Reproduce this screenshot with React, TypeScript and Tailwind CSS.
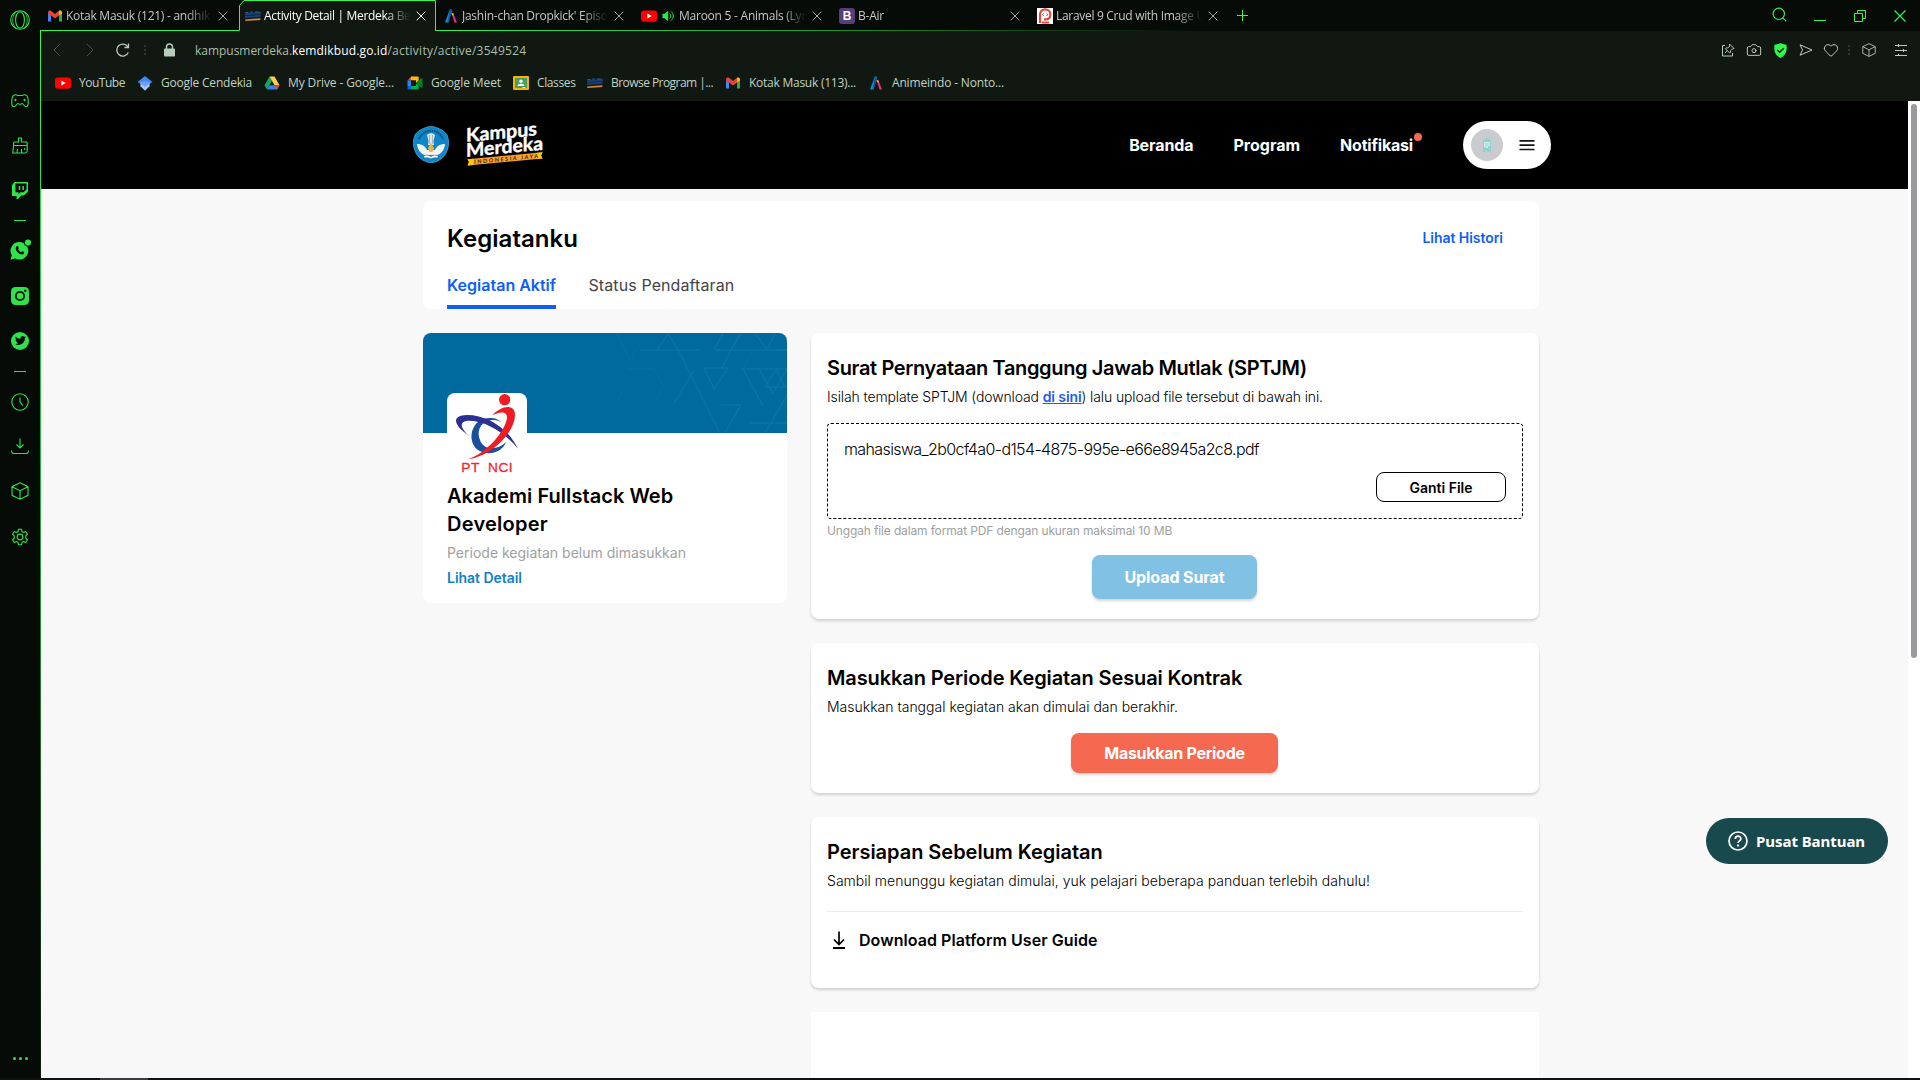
import type { ReactNode } from "react";
import { Camera, Heart, Search } from "lucide-react";
import { FaTwitter } from "react-icons/fa";

/* ---------- site icons ---------- */

const Gmail = () => (
  <svg viewBox="0 0 16 16" className="h-4 w-4">
    <path d="M1 3.5v10h3V7.5z" fill="#4285f4" />
    <path d="M15 3.5v10h-3V7.5z" fill="#34a853" />
    <path d="M1 4.5C1 2.4 3 2 4 2.8L8 6l4-3.2v4.7L8 10.6 4 7.5 1 5.4z" fill="#ea4335" />
    <path d="M12 2.8c1-.8 3-.4 3 1.7v.9l-3 2.1z" fill="#fbbc04" />
  </svg>
);

const Kampus = () => (
  <svg viewBox="0 0 16 16" className="h-4 w-4">
    <path d="M0 5.2l16-1.4v2.4L0 7.4zM0 8l15.500-1.200v2L0 10z" fill="#173f74" />
    <path d="M.5 4.500h3M5 4h3M10 4h4" stroke="#2b5c9c" strokeWidth="1" />
    <path d="M.3 11.600l15-1.400v1.800l-15 1z" fill="#d98b43" />
  </svg>
);

const Animeindo = () => (
  <svg viewBox="0 0 16 16" className="h-4 w-4">
    <path d="M7 1l2 1-3.500 12.500H2z" fill="#0c8fd6" />
    <path d="M7 1l2.500 2L6 12l-1.500 2.500z" fill="#075a9c" />
    <path d="M8.500 5l2 .5L14 14.500h-2.500z" fill="#e0307a" />
    <path d="M8.600 5l1.800.5.5 1.800H9z" fill="#ffb020" />
  </svg>
);

const YouTube = () => (
  <svg viewBox="0 0 16 16" className="h-4 w-4">
    <rect x="0" y="2.500" width="16" height="11.200" rx="2.600" fill="#ff0000" />
    <path d="M6.300 5.600l4.400 2.500-4.400 2.500z" fill="#fff" />
  </svg>
);

const Bootstrap = () => (
  <span className="flex h-4 w-4 items-center justify-center rounded-[3px] bg-[#563d7c] font-['Liberation_Sans'] text-[12px] leading-4 font-bold text-white">
    B
  </span>
);

const Laravel = () => (
  <svg viewBox="0 0 16 16" className="h-4 w-4">
    <rect width="16" height="16" fill="#fff" />
    <path d="M3 15V6.500a5.200 5.200 0 0 1 10.400 0c0 3-2 4.900-5 4.900H7" fill="none" stroke="#e8473c" strokeWidth="2.200" />
    <path d="M6.600 5.500L5.400 6.700l1.200 1.200M9.700 5.500l1.200 1.200-1.200 1.200" fill="none" stroke="#333" strokeWidth=".8" />
    <path d="M5 14.500h7" stroke="#e8473c" strokeWidth="2" />
  </svg>
);

const Cendekia = () => (
  <svg viewBox="0 0 16 16" className="h-4 w-4">
    <path d="M8 1L.5 7 4 9.200h8L15.500 7z" fill="#4285f4" />
    <path d="M3.500 7.500h9v3.700L8 15.800l-4.500-4.600z" fill="#a9c6fa" />
    <path d="M3.500 8.500C5 5.500 11 5.500 12.500 8.500L8 12z" fill="#6ea0f5" />
  </svg>
);

const Drive = () => (
  <svg viewBox="0 0 16 16" className="h-4 w-4">
    <path d="M5.500 1.500L8 5.800 3 14.500.5 10.200z" fill="#11a861" />
    <path d="M5.500 1.500h5l5 8.700h-5z" fill="#ffcf48" />
    <path d="M5.500 10.200h10L13 14.500H3z" fill="#3f7ef0" />
    <path d="M11.500 10.200h4L13 14.500z" fill="#ea4335" />
  </svg>
);

const Meet = () => (
  <svg viewBox="0 0 16 16" className="h-4 w-4">
    <path d="M.5 5.500l3.500-4V5.500z" fill="#ea4335" />
    <path d="M.5 5.500H4v5.500H.5z" fill="#2684fc" />
    <path d="M4 1.500h6.500c.8 0 1.200.4 1.200 1.200v2.800L9 8V5.300H4z" fill="#ffba00" />
    <path d="M.5 11H4v3.500H1.700c-.8 0-1.200-.4-1.200-1.200z" fill="#0066da" />
    <path d="M4 11h5V8l2.700 2.400v2.900c0 .8-.4 1.200-1.200 1.200H4z" fill="#00ac47" />
    <path d="M9 8l5-4.500c.7-.5 1.500-.3 1.500.6v7.800c0 .9-.8 1.100-1.500.6z" fill="#00832d" />
  </svg>
);

const Classroom = () => (
  <svg viewBox="0 0 16 16" className="h-4 w-4">
    <rect x="0" y="1" width="16" height="14" rx="1" fill="#f4b400" />
    <rect x="2" y="3" width="12" height="10" fill="#4a9d5e" />
    <circle cx="8" cy="6.300" r="1.700" fill="#fff" />
    <path d="M4.500 11c0-3 7-3 7 0z" fill="#fff" />
    <path d="M9.500 13h3v-.9h-3z" fill="#e8f5ee" />
  </svg>
);

const Speaker = () => (
  <svg viewBox="0 0 12 12" className="h-3 w-3">
    <path d="M.5 3.800h2L6.200.8v10.400L2.500 8.200h-2z" fill="#2fe34a" />
    <path d="M7.700 3.500c1.500 1.300 1.500 3.700 0 5M9 1.500c3 2.500 3 6.500 0 9" fill="none" stroke="#2fe34a" />
  </svg>
);

const CloseMark = ({ tone }: { tone: string }) => (
  <svg viewBox="0 0 10 10" className={`h-[10px] w-[10px] shrink-0 ${tone}`}>
    <path d="M.7.7l8.600 8.600M9.300.7L.7 9.300" stroke="currentColor" fill="none" />
  </svg>
);

const Cube = ({ className }: { className: string }) => (
  <svg viewBox="0 0 18 18" className={className} fill="none" stroke="currentColor" strokeWidth="1.100">
    <path d="M9 .8l8 3.900v8.600l-8 3.900-8-3.900V4.700zM1 4.700l8 4 8-4M9 8.700v8.500" />
  </svg>
);

/* ---------- browser chrome ---------- */

type TabInfo = {
  icon: ReactNode;
  title: string;
  tracking: string;
  active?: boolean;
  sound?: boolean;
};

const tabs: TabInfo[] = [
  { icon: <Gmail />, title: "Kotak Masuk (121) - andhik", tracking: "tracking-[-0.26px]" },
  { icon: <Kampus />, title: "Activity Detail | Merdeka Be", tracking: "tracking-[-0.32px]", active: true },
  { icon: <Animeindo />, title: "Jashin-chan Dropkick' Episo", tracking: "tracking-[-0.26px]" },
  { icon: <YouTube />, title: "Maroon 5 - Animals (Lyri", tracking: "tracking-[-0.24px]", sound: true },
  { icon: <Bootstrap />, title: "B-Air", tracking: "tracking-[-0.23px]" },
  { icon: <Laravel />, title: "Laravel 9 Crud with Image U", tracking: "tracking-[-0.3px]" },
];

function Tab({ icon, title, tracking, active, sound }: TabInfo) {
  return (
    <div
      className={`relative flex h-[31px] w-[198px] shrink-0 items-center pt-[1px] pr-[11px] pl-[6px] ${
        active ? "text-white" : "text-[#c3c8c4]"
      }`}
    >
      {active && (
        <svg viewBox="0 0 198 31" className="absolute top-0 left-0 h-[31px] w-[198px]">
          <path d="M.5 31V5.500L5 .5h191.500V31z" fill="#111812" />
          <path d="M0 30.500h.5V5.500L5 .5h191.500v30h1.500" fill="none" stroke="#36f34f" />
        </svg>
      )}
      <span className="relative flex shrink-0">{icon}</span>
      {sound && (
        <span className="ml-[5px] flex shrink-0">
          <Speaker />
        </span>
      )}
      <span
        className={`relative mr-[6px] min-w-0 flex-1 text-[12px] leading-4 whitespace-nowrap [mask-image:linear-gradient(to_right,black_82%,transparent)] ${
          sound ? "ml-[5px]" : "ml-[3px]"
        } ${tracking}`}
      >
        {title}
      </span>
      <span className="relative flex">
        <CloseMark tone={active ? "text-white" : "text-[#a4aaa5]"} />
      </span>
    </div>
  );
}

const bookmarks: { icon: ReactNode; label: string; box: string }[] = [
  { icon: <YouTube />, label: "YouTube", box: "w-[82px] tracking-[-0.48px]" },
  { icon: <Cendekia />, label: "Google Cendekia", box: "w-[127px] tracking-[-0.22px]" },
  { icon: <Drive />, label: "My Drive - Google...", box: "w-[143px] tracking-[-0.11px]" },
  { icon: <Meet />, label: "Google Meet", box: "w-[106px] tracking-[-0.1px]" },
  { icon: <Classroom />, label: "Classes", box: "w-[74px] tracking-[-0.38px]" },
  { icon: <Kampus />, label: "Browse Program |...", box: "w-[138px] tracking-[-0.55px]" },
  { icon: <Gmail />, label: "Kotak Masuk (113)...", box: "w-[143px] tracking-[-0.25px]" },
  { icon: <Animeindo />, label: "Animeindo - Nonto...", box: "w-[150px] tracking-[-0.17px]" },
];

const Dots = () => (
  <span className="flex flex-col gap-[2px]">
    <i className="h-[2px] w-[2px] bg-[#2c382e]" />
    <i className="h-[2px] w-[2px] bg-[#2c382e]" />
    <i className="h-[2px] w-[2px] bg-[#2c382e]" />
  </span>
);

function TabStrip() {
  return (
    <div className="flex h-[31px] justify-between bg-[#060b07]">
      <div className="relative flex">
        <div className="absolute bottom-0 left-0 h-px w-[199px] bg-[#36f34f]" />
        <div className="absolute bottom-0 left-[395px] h-px w-[760px] bg-linear-to-r from-[#36f34f] via-[#1f9a31] to-transparent" />
        <div className="flex pl-px">
          {tabs.map((t) => (
            <Tab key={t.title} {...t} />
          ))}
        </div>
        <svg viewBox="0 0 12 12" className="mt-[9px] ml-[7px] h-3 w-3">
          <path d="M6.500 1v11M1 6.500h11" stroke="#36f34f" />
        </svg>
      </div>
      <div className="flex items-center pr-[14px] text-[#36f34f]">
        <Search className="mr-[26px] mb-[3px] h-[17px] w-[17px]" strokeWidth={1.600} />
        <svg viewBox="0 0 12 12" className="mr-[28px] h-3 w-3">
          <path d="M0 10.500h12" stroke="currentColor" />
        </svg>
        <svg viewBox="0 0 12 12" className="mr-[28px] h-3 w-3" fill="none" stroke="currentColor">
          <path d="M.5 3.500h8v8h-8zM3.500 3.500v-3h8v8h-3" />
        </svg>
        <svg viewBox="0 0 12 12" className="h-3 w-3">
          <path d="M.5.5l11 11M11.500.5l-11 11" stroke="currentColor" strokeWidth="1.200" />
        </svg>
      </div>
    </div>
  );
}

function AddressBar() {
  return (
    <div className="flex h-[38px] items-center justify-between pr-[13px] pl-[12px] text-[#b9ccbb]">
      <div className="flex items-center">
        <svg viewBox="0 0 8 14" className="h-[14px] w-2 text-[#465248]" fill="none" stroke="currentColor">
          <path d="M7.200.8L1 7l6.200 6.200" />
        </svg>
        <svg viewBox="0 0 8 14" className="ml-[25px] h-[14px] w-2 text-[#465248]" fill="none" stroke="currentColor">
          <path d="M.8.8L7 7 .8 13.200" />
        </svg>
        <svg viewBox="0 0 14 14" className="ml-[22px] h-[14px] w-[14px]" fill="none" stroke="currentColor" strokeWidth="1.300">
          <path d="M12.300 9.500a6 6 0 1 1-.3-5.500M12.500.5V4.500H8.500" />
        </svg>
        <span className="ml-[14px]">
          <Dots />
        </span>
        <svg viewBox="0 0 11 14" className="ml-[18px] h-[14px] w-[11px]">
          <path d="M2.500 6V4a3 3 0 0 1 6 0v2" fill="none" stroke="currentColor" strokeWidth="1.400" />
          <rect x="0" y="5.500" width="11" height="8" rx="1" fill="currentColor" />
        </svg>
        <span className="ml-[20px] pt-[2px] text-[12px] leading-4 whitespace-nowrap text-[#a9bfac]">
          <span className="tracking-[-0.03px]">kampusmerdeka.</span>
          <span className="tracking-[0.14px] text-white">kemdikbud.go.id</span>
          <span className="tracking-[0.26px]">/activity/active/3549524</span>
        </span>
      </div>
      <div className="flex items-center">
        <svg viewBox="0 0 14 14" className="mr-[11px] h-[14px] w-[14px]" fill="none" stroke="currentColor">
          <path d="M4 2.500H1.500v10.500h10V10M8.500 1l4.500 4.500-1.500.3-2 2 .2 1.500-1 .7-4.200-4.200.8-1 1.500.2 2-2zM6.200 7.800L4 10" />
        </svg>
        <Camera className="mr-[12px] h-4 w-4" strokeWidth={1.500} />
        <svg viewBox="0 0 13 15" className="mr-[12px] h-[15px] w-[13px]">
          <path d="M6.500 0C8.500 1.300 10.700 1.700 12.500 1.700c.5 5.300.3 10-6 13.300C.2 11.700 0 7 .5 1.700 2.300 1.700 4.500 1.300 6.500 0z" fill="#2dfa4b" />
          <path d="M3.300 7l2.300 2.300 4.200-4" fill="none" stroke="#111812" strokeWidth="1.500" />
        </svg>
        <svg viewBox="0 0 14 12" className="mr-[10px] h-3 w-[14px]" fill="none" stroke="currentColor">
          <path d="M1 .8L13 6 1 11.200 3.500 6z" />
        </svg>
        <Heart className="mr-[9px] h-[16px] w-[16px]" strokeWidth={1.500} />
        <Dots />
        <Cube className="mr-[19px] ml-[12px] h-[14px] w-[14px]" />
        <svg viewBox="0 0 12 12" className="h-3 w-3" fill="none" stroke="currentColor">
          <path d="M0 1.500h12M0 6.500h12M0 11.500h12M3.500 0v3M8.500 5v3M3.500 10v2" />
        </svg>
      </div>
    </div>
  );
}

function BookmarkBar() {
  return (
    <div className="flex h-[32px] items-center pb-[4px] pl-[14px] text-[12px] leading-4 text-[#c0d2c2]">
      {bookmarks.map((b) => (
        <div key={b.label} className={`flex shrink-0 items-center gap-2 whitespace-nowrap ${b.box}`}>
          {b.icon}
          <span>{b.label}</span>
        </div>
      ))}
    </div>
  );
}

function SideItem({ children }: { children: ReactNode }) {
  return <div className="flex h-[45px] w-10 shrink-0 items-center justify-center">{children}</div>;
}

const SideRule = () => (
  <div className="flex h-[15px] w-10 shrink-0 items-center justify-center">
    <div className="h-px w-3 bg-[#2fe34a]" />
  </div>
);

function Sidebar() {
  const line = { fill: "none", stroke: "currentColor", strokeWidth: 1.100 };
  return (
    <aside className="flex w-10 shrink-0 flex-col bg-[#060b07] text-[#2fe34a]">
      <div className="flex h-[78px] justify-center pt-[10px]">
        <svg viewBox="0 0 20 20" className="h-5 w-5" {...line}>
          <circle cx="10" cy="10" r="9.300" />
          <ellipse cx="10" cy="10" rx="4.400" ry="8.300" />
          <path d="M6.500 1.500C1.500 5 1.500 15 6.500 18.500M13.500 1.500c5 3.500 5 13.500 0 17" strokeWidth=".8" />
        </svg>
      </div>
      <SideItem>
        <svg viewBox="0 0 18 14" className="h-[14px] w-[18px]" {...line}>
          <path d="M4.500.7c1.500 0 2 .8 3 .8h3c1 0 1.500-.8 3-.8 2.500 0 3.800 2.300 3.800 6.800 0 3.500-.6 5.300-2.300 5.300-1.800 0-2.500-3.300-3.800-3.300-1 0-1 1-2.200 1s-1.200-1-2.200-1c-1.300 0-2 3.300-3.800 3.300C1.300 12.800.7 11 .7 7.500.7 3 2 .7 4.500.7z" />
          <path d="M3.200 6h2.600M4.500 4.700v2.600M12.200 6h2.600M13.500 4.700v2.600" strokeWidth=".9" />
        </svg>
      </SideItem>
      <SideItem>
        <svg viewBox="0 0 16 17" className="h-[17px] w-4" {...line}>
          <path d="M6.500 5V1h3v4h4.500q1 0 1.200 1v2.500H1.500V6q0-1 1-1zM1.500 8.500L.8 16h12.500q1.700 0 1.900-2V8.500M5 16l.5-4M9.500 16v-4M12.700 13v-2" />
        </svg>
      </SideItem>
      <SideItem>
        <svg viewBox="0 0 16 17" className="h-[17px] w-4">
          <path
            d="M2.500 0H16v9.500l-4 4H9.300L6 17H4.500v-3H0V3zM3.500 1.500v8.800h3v2L8.500 10.300h3L14.500 7.500v-6z"
            fill="currentColor"
            fillRule="evenodd"
          />
          <path d="M7.500 4v4M11.200 4v4" stroke="currentColor" strokeWidth="1.500" />
        </svg>
      </SideItem>
      <SideRule />
      <SideItem>
        <svg viewBox="0 0 20 20" className="mb-[2px] h-5 w-5 overflow-visible">
          <path d="M9.500 2a8.800 8.800 0 1 1-4.300 16.500L.5 19.800l1.300-4.500A8.800 8.800 0 0 1 9.500 2z" fill="currentColor" />
          <path
            d="M6.700 6.300c.5-.5 1.200-.4 1.400.1l.7 1.600c.1.400-.6 1.100-.6 1.400.5 1.200 1.500 2.100 2.700 2.600.4 0 .9-.9 1.300-.8l1.700.9c.5.3 0 1.500-.5 1.900-2 1.500-7.500-1.700-7.700-5.600 0-.9.400-1.600 1-2.100z"
            fill="#060b07"
          />
          <circle cx="18" cy="2.500" r="4" fill="#060b07" />
          <circle cx="18" cy="2.500" r="3.100" fill="currentColor" />
        </svg>
      </SideItem>
      <SideItem>
        <svg viewBox="0 0 18 18" className="h-[18px] w-[18px]">
          <rect width="18" height="18" rx="4.500" fill="currentColor" />
          <circle cx="9" cy="9" r="4.200" fill="none" stroke="#060b07" strokeWidth="1.800" />
          <circle cx="14.300" cy="3.700" r="1.200" fill="#060b07" />
        </svg>
      </SideItem>
      <SideItem>
        <span className="flex h-[18px] w-[18px] items-center justify-center rounded-full bg-[#2fe34a]">
          <FaTwitter className="h-[11px] w-[11px] text-[#060b07]" />
        </span>
      </SideItem>
      <div className="h-px" />
      <SideRule />
      <SideItem>
        <svg viewBox="0 0 18 18" className="h-[18px] w-[18px]" {...line}>
          <circle cx="9" cy="9" r="8.200" />
          <path d="M9 4.500V9l3 3.500" />
        </svg>
      </SideItem>
      <SideItem>
        <svg viewBox="0 0 18 16" className="mb-[2px] h-4 w-[18px]" {...line}>
          <path d="M9 .5v9.500M5.500 6.500L9 10l3.500-3.500M.7 12.500v1q0 2 2 2h12.600q2 0 2-2v-1" />
        </svg>
      </SideItem>
      <SideItem>
        <Cube className="mb-px h-[18px] w-[18px]" />
      </SideItem>
      <SideItem>
        <svg viewBox="0 0 18 18" className="h-[18px] w-[18px]" {...line}>
          <circle cx="9" cy="9" r="2.900" />
          <path d="M7.500.8h3l.5 2.300 1.500.8 2.200-.9 1.700 2.600-1.600 1.700v2.400l1.600 1.700-1.700 2.600-2.200-.9-1.500.8-.5 2.300h-3L7 13.900l-1.500-.8-2.200.9-1.700-2.600 1.600-1.700V7.300L1.600 5.600 3.300 3l2.200.9L7 3.100z" transform="translate(0 .5)" />
        </svg>
      </SideItem>
      <div className="mt-auto mb-[18px] flex justify-center gap-[3px]">
        <i className="h-[3px] w-[3px] rounded-full bg-[#2fe34a]" />
        <i className="h-[3px] w-[3px] rounded-full bg-[#2fe34a]" />
        <i className="h-[3px] w-[3px] rounded-full bg-[#2fe34a]" />
      </div>
    </aside>
  );
}

/* ---------- site ---------- */

const Emblem = () => (
  <svg viewBox="0 0 36 37" className="mb-px h-[37px] w-9">
    <path d="M18 .4C23 .8 31 4 34 9c2 5 2.500 11-1 18-3 5.500-9 9.500-15 9.600C12 36.500 6 32.500 3 27-.5 20 0 14 2 9 5 4 13 .8 18 .4z" fill="#0e86c8" stroke="#5db4e0" strokeWidth=".7" />
    <path d="M6 13C9 7 13 5 18 4.800S27 7 30 13" fill="none" stroke="#0b4d7c" strokeWidth="2" strokeDasharray="1.500 .8" />
    <path d="M14 9c2-2.500 6-2.500 8 0l-1.500 6 .5 4h-6l.5-4z" fill="#dfe3e4" />
    <path d="M16.500 9v9M19.500 9v9" stroke="#98a3a8" strokeWidth=".7" />
    <path d="M4 18c5 0 8 2 10 6h8c2-4 5-6 10-6-.5 5-3 9-7.500 11H11.500C7 27 4.500 23 4 18z" fill="#f3f5f4" />
    <path d="M18 17l3 5-1.500 4h-3L15 22z" fill="#e8b83c" />
    <path d="M11 29.500q3.500-1.500 7 1 3.500-2.500 7-1v2.500q-4-1-7 .8-3-1.800-7-.8z" fill="#fff" stroke="#1b5d86" strokeWidth=".5" />
  </svg>
);

const KampusMerdeka = () => (
  <svg viewBox="0 0 78 44" className="h-11 w-[78px] overflow-visible">
    <g transform="translate(0 -1.200) skewY(-5.300)" fill="#fff" fontFamily="Lato, sans-serif" fontWeight="700" fontSize="19">
      <text x="-1" y="20" textLength="71" lengthAdjust="spacingAndGlyphs" stroke="#fff" strokeWidth=".4">
        Kampus
      </text>
      <text x="-1" y="35" textLength="77" lengthAdjust="spacingAndGlyphs" stroke="#fff" strokeWidth=".4">
        Merdeka
      </text>
      <path d="M.5 37.500H75.500l-1.500 3 1.500 3.200H.5l1.500-3.200z" fill="#f8a132" />
      <path d="M.5 37.500h6v6.200h-6l1.500-3.200zM69 37.500h6.500l-1.500 3 1.500 3.200H69z" fill="#fdc90a" />
      <text x="7" y="42.700" fontSize="5.500" textLength="64" fill="#3c2500">
        INDONESIA JAYA
      </text>
    </g>
  </svg>
);

function SiteHeader() {
  return (
    <header className="flex h-[88px] items-center bg-black pr-[357px] pl-[372px]">
      <Emblem />
      <div className="ml-[18px]">
        <KampusMerdeka />
      </div>
      <nav className="ml-auto flex items-center text-[16px] leading-6 font-bold text-white">
        <a className="mr-[40px] tracking-[-0.1px]">Beranda</a>
        <a className="mr-[40px] tracking-[0px]">Program</a>
        <a className="relative mr-[50px] tracking-[-0.2px]">
          Notifikasi
          <i className="absolute top-0 -right-[9px] h-2 w-2 rounded-full bg-[#f9694f]" />
        </a>
      </nav>
      <div className="flex h-12 w-[88px] items-center justify-between rounded-full bg-white pr-4 pl-2">
        <span className="flex h-8 w-8 items-center justify-center rounded-full bg-[#cacbcf]">
          <svg viewBox="0 0 10 14" className="h-[14px] w-[10px]">
            <path d="M1 4.500C1 1.500 3 .2 5 .2s4 1.300 4 4.300v9.200H6.500L5 12.500l-1.500 1.200H1z" fill="#8fd3cf" />
            <path d="M2.500 4.500h5v3l-5 1.500zM4 9.500h2" stroke="#e4efef" fill="#b9dedd" strokeWidth=".8" />
          </svg>
        </span>
        <svg viewBox="0 0 16 12" className="h-3 w-4" stroke="#151515" strokeWidth="1.700">
          <path d="M.5 1.800h15M.5 6.200h15M.5 10.500h15" />
        </svg>
      </div>
    </header>
  );
}

function HeadCard() {
  return (
    <section className="flex h-[108px] flex-col justify-between rounded-lg bg-white px-6 pt-[22px]">
      <div className="flex items-center justify-between pr-3">
        <h1 className="text-[24px] leading-8 font-semibold tracking-[0.04px] text-black">Kegiatanku</h1>
        <a className="mb-[2px] text-[14px] leading-5 font-semibold tracking-[-0.04px] text-[#0d5ef4]">Lihat Histori</a>
      </div>
      <div className="flex gap-8 text-[16px] leading-6">
        <a className="h-[36px] border-b-4 border-[#0d5ef4] font-semibold text-[#0d5ef4]">Kegiatan Aktif</a>
        <a className="pl-[0.5px] tracking-[0.1px] text-[#444]">Status Pendaftaran</a>
      </div>
    </section>
  );
}

const BannerPattern = () => (
  <svg viewBox="0 0 364 100" className="h-[100px] w-[364px]" fill="none" stroke="#1c7fb6" strokeWidth="1.300">
    <g opacity=".45">
      <path d="M218 17h60M292 17h72M245 0l14 24 38 76M246 0l-12 17M300 0l-9 17M272 36l-22 36M318 0l-10 17-9 18M332 0l12 17M352 0l-8 17" />
      <path d="M281 35h24l-14 21zM318 36h46M336 36l14 24 14-24M342 54h20l-9-18zM320 36l20 37M346 17h18" />
      <path d="M298 72h20l-16 28M326 90h38M364 62l-22 38" />
      <path d="M194 0l13 28 9-17M203 36h28l9 17-8 18M203 54l-12 17M320 36l10-19" opacity=".5" />
    </g>
  </svg>
);

const CompanyLogo = () => (
  <svg viewBox="0 0 240 240" className="h-20 w-20">
    <path d="M162 88C150 72 112 70 92 88c-26 24-24 66 2 84 30 18 70 8 83-24-26 24-62 24-76-2-14-28-4-58 30-64 12-2 22 0 31 6z" fill="#1b4f9c" />
    <path d="M69 131C20 98 10 68 60 66c60 0 122 38 153 101C172 118 115 82 62 83c-27 2-22 24 7 48z" fill="#2d2f92" />
    <path d="M136 67c26-30 68-36 68-2 0 50-66 124-141 134 52-18 104-74 116-118 6-26-16-28-43-14z" fill="#ee1c25" />
    <circle cx="173" cy="20" r="17" fill="#ee1c25" />
    <g fill="#ee2a33" stroke="#ee2a33" strokeWidth="1" fontFamily="Liberation Sans, sans-serif" fontSize="41">
      <text x="43" y="238" textLength="54">
        PT
      </text>
      <text x="123" y="238" textLength="74">
        NCI
      </text>
    </g>
  </svg>
);

function ActivityCard() {
  return (
    <section className="h-[270px] w-[364px] shrink-0 overflow-hidden rounded-lg bg-white">
      <div className="h-[100px] bg-[#006a9e]">
        <BannerPattern />
      </div>
      <div className="px-6">
        <div className="relative -mt-10 h-20 w-20 overflow-hidden rounded-lg bg-white">
          <CompanyLogo />
        </div>
        <h2 className="mt-[9px] text-[20px] leading-7 font-semibold tracking-[0.05px] text-black">
          Akademi Fullstack Web
          <br />
          <span className="tracking-[0.25px]">Developer</span>
        </h2>
        <p className="mt-[5px] text-[14px] leading-5 text-[#a0a0a0]">Periode kegiatan belum dimasukkan</p>
        <a className="mt-[5px] block text-[14px] leading-5 font-semibold tracking-[-0.04px] text-[#1181c6]">Lihat Detail</a>
      </div>
    </section>
  );
}

function Card({ height, title, titleTracking, children }: { height: string; title: string; titleTracking: string; children: ReactNode }) {
  return (
    <section className={`rounded-lg bg-white px-4 pt-[21px] shadow-[0_2px_3px_rgba(0,0,0,0.16)] ${height}`}>
      <h2 className={`text-[20px] leading-7 font-semibold whitespace-nowrap text-black ${titleTracking}`}>{title}</h2>
      {children}
    </section>
  );
}

function RightColumn() {
  return (
    <div className="flex w-[728px] flex-col gap-6">
      <Card height="h-[286px]" title="Surat Pernyataan Tanggung Jawab Mutlak (SPTJM)" titleTracking="tracking-[-0.36px]">
        <p className="mt-[5px] text-[14px] leading-5 font-light tracking-[-0.12px] whitespace-nowrap text-black">
          Isilah template SPTJM (download{" "}
          <a className="font-semibold tracking-[-0.1px] text-[#1d5bf0] underline">di sini</a>) lalu upload file tersebut di bawah ini.
        </p>
        <div className="mt-[16px] flex h-24 flex-col rounded border border-dashed border-black px-4 pt-[13px]">
          <span className="text-[16px] leading-6 font-light tracking-[-0.61px] whitespace-nowrap text-black">
            mahasiswa_2b0cf4a0-d154-4875-995e-e66e8945a2c8.pdf
          </span>
          <button className="mt-[11px] h-[30px] w-[130px] self-end rounded-lg border border-black pt-px text-[14px] leading-5 font-semibold text-black">
            Ganti File
          </button>
        </div>
        <p className="mt-[4px] text-[12px] leading-4 tracking-[-0.14px] text-[#a0a0a0]">
          Unggah file dalam format PDF dengan ukuran maksimal 10 MB
        </p>
        <button className="mt-4 ml-[265px] block h-11 w-[165px] rounded-lg bg-[#81c2e4] text-[16px] leading-6 font-bold tracking-[-0.08px] text-white shadow-[0_2px_3px_rgba(0,0,0,0.16)]">
          Upload Surat
        </button>
      </Card>
      <Card height="h-[150px]" title="Masukkan Periode Kegiatan Sesuai Kontrak" titleTracking="tracking-[-0.11px]">
        <p className="mt-[5px] text-[14px] leading-5 font-light text-black">Masukkan tanggal kegiatan akan dimulai dan berakhir.</p>
        <button className="mt-4 ml-[244px] block h-10 w-[207px] rounded-lg bg-[#f66951] text-[16px] leading-6 font-bold tracking-[-0.28px] text-white shadow-[0_2px_3px_rgba(0,0,0,0.16)]">
          Masukkan Periode
        </button>
      </Card>
      <Card height="h-[171px]" title="Persiapan Sebelum Kegiatan" titleTracking="tracking-[-0.03px]">
        <p className="mt-[5px] text-[14px] leading-5 font-light tracking-[0.03px] whitespace-nowrap text-black">
          Sambil menunggu kegiatan dimulai, yuk pelajari beberapa panduan terlebih dahulu!
        </p>
        <div className="mt-[20px] flex items-center border-t border-[#ebebeb] pt-[16px] pl-[5px]">
          <svg viewBox="0 0 14 18" className="h-[18px] w-[14px]" fill="none" stroke="#000">
            <path d="M7 .5v13M2 8.500L7 13.500 12 8.500" strokeWidth="1.700" />
            <path d="M1 17h12" strokeWidth="2" />
          </svg>
          <span className="ml-[13px] text-[16px] leading-6 font-semibold tracking-[0.06px] text-black">Download Platform User Guide</span>
        </div>
      </Card>
      <div className="h-[120px] bg-white" />
    </div>
  );
}

export default function App() {
  return (
    <div className="relative flex h-[1080px] w-[1920px] flex-col overflow-hidden bg-[#101112] font-['Open_Sans',sans-serif]">
      <div className="flex h-[1078px]">
        <Sidebar />
        <div className="mt-[30px] w-px shrink-0 bg-linear-to-b from-[#36f34f] via-[#23a636] to-[#0b1a0d]" />
        <div className="-ml-px flex min-w-0 flex-1 flex-col">
          <TabStrip />
          <div className="ml-px h-[70px] bg-[#111812]">
            <AddressBar />
            <BookmarkBar />
          </div>
          <div className="ml-px flex h-[977px]">
            <main className="w-[1867px] overflow-hidden bg-[#f8f8f8] font-['Inter',sans-serif]">
              <SiteHeader />
              <div className="mt-3 ml-[382px] w-[1116px]">
                <HeadCard />
                <div className="mt-6 flex items-start gap-6">
                  <ActivityCard />
                  <RightColumn />
                </div>
              </div>
            </main>
            <div className="flex flex-1 justify-center bg-white pt-[3px]">
              <div className="h-[554px] w-[6px] rounded-full bg-[#9a9a9e]" />
            </div>
          </div>
        </div>
      </div>
      <div className="ml-[100px] h-[2px] w-12 bg-[#3c3c3e]" />
      <button className="absolute top-[818px] left-[1706px] flex h-[46px] w-[182px] items-center rounded-full bg-[#17494d] pl-[22px] text-white">
        <svg viewBox="0 0 20 20" className="h-5 w-5" fill="none" stroke="currentColor">
          <circle cx="10" cy="10" r="9" strokeWidth="1.700" />
          <path d="M7.300 8c0-3.800 5.600-3.600 5.600-.2 0 2-2.800 2.100-2.800 4.200" strokeWidth="1.800" />
          <path d="M10.100 13.500v2" strokeWidth="1.900" />
        </svg>
        <span className="ml-[8px] font-['Noto_Sans'] text-[15px] leading-5 font-bold tracking-[-0.05px] whitespace-nowrap">Pusat Bantuan</span>
      </button>
    </div>
  );
}
